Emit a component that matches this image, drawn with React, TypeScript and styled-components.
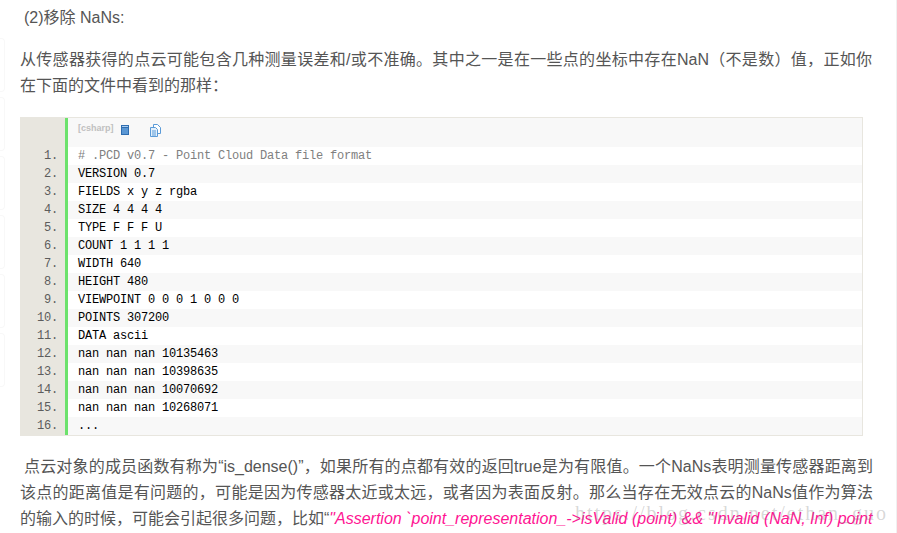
import React from 'react'
import styled, { createGlobalStyle } from 'styled-components'

const GlobalStyle = createGlobalStyle`
  html, body {
    margin: 0;
    padding: 0;
    background: #fff;
  }
`

const Page = styled.div`
  position: relative;
  width: 897px;
  height: 533px;
  overflow: hidden;
  box-sizing: border-box;
  border-right: 1px solid #f0f0f0;
  font-family: "Liberation Sans", "Noto Sans CJK SC", sans-serif;
  font-size: 16px;
  line-height: 26px;
  color: #555;
  text-spacing-trim: space-all;
`

const SideRail = styled.div`
  position: absolute;
  left: 0;
  top: 38px;
  display: flex;
  flex-direction: column;
  gap: 5px;
`

const RailTab = styled.div`
  width: 5px;
  height: 54px;
  box-sizing: border-box;
  border: 1px solid #f8f8f8;
  border-left: 0;
  border-radius: 0 4px 4px 0;
`

const Article = styled.div`
  position: relative;
  width: 853px;
  padding: 5px 0 0 20px;
`

const Heading = styled.p`
  margin: 0 0 16px;
  text-indent: 4px;
`

const Paragraph = styled.p<{ $indent?: boolean }>`
  margin: 0;
  padding-right: ${p => (p.$indent ? '0' : '1px')};
  text-align: justify;
  text-indent: ${p => (p.$indent ? '4px' : '0')};
`

const Emphasis = styled.em`
  color: #ff1493;
`

const CodeBlock = styled.div`
  width: 843px;
  margin: 18px 0 18px;
  box-sizing: border-box;
  display: grid;
  grid-template-columns: 45px 1fr;
  background: #e8e6df;
  border: 1px solid #e8e6df;
  border-left: 0;
  font-family: "Liberation Mono", monospace;
  font-size: 12px;
  letter-spacing: -0.2px;
  line-height: 18px;
`

const Toolbar = styled.div`
  grid-column: 2;
  height: 29px;
  box-sizing: border-box;
  display: flex;
  align-items: flex-start;
  padding: 3px 0 0 10px;
  background: #f8f8f8;
  border-left: 3px solid #6ce26c;
  letter-spacing: 0;
`

const LangLabel = styled.span`
  font-family: "Liberation Sans", sans-serif;
  font-size: 9px;
  font-weight: bold;
  line-height: 14px;
  color: #c0c0c0;
`

const ToolIcon = styled.svg<{ $gap: number; $top: number }>`
  display: block;
  margin-left: ${p => p.$gap}px;
  margin-top: ${p => p.$top}px;
`

const LineNumber = styled.div`
  grid-column: 1;
  padding-right: 7px;
  text-align: right;
  color: #5c5c5c;
`

const CodeLine = styled.div<{ $even: boolean; $comment: boolean }>`
  grid-column: 2;
  height: 18px;
  padding-left: 10px;
  background: ${p => (p.$even ? '#f8f8f8' : '#fff')};
  border-left: 3px solid #6ce26c;
  color: ${p => (p.$comment ? '#808080' : '#000')};
  white-space: pre;
`

const Watermark = styled.div`
  position: absolute;
  left: 575px;
  top: 501px;
  font-family: "Liberation Serif", serif;
  font-size: 20px;
  line-height: 24px;
  letter-spacing: 2px;
  color: rgba(120, 120, 120, 0.3);
  white-space: nowrap;
  pointer-events: none;
`

const lines = [
  '# .PCD v0.7 - Point Cloud Data file format',
  'VERSION 0.7',
  'FIELDS x y z rgba',
  'SIZE 4 4 4 4',
  'TYPE F F F U',
  'COUNT 1 1 1 1',
  'WIDTH 640',
  'HEIGHT 480',
  'VIEWPOINT 0 0 0 1 0 0 0',
  'POINTS 307200',
  'DATA ascii',
  'nan nan nan 10135463',
  'nan nan nan 10398635',
  'nan nan nan 10070692',
  'nan nan nan 10268071',
  '...',
]

const App = () => {
  return (
    <Page>
      <GlobalStyle />
      <SideRail>
        {[0, 1, 2, 3, 4, 5].map(i => <RailTab key={i} />)}
      </SideRail>
      <Article>
        <Heading>(2)移除 NaNs:</Heading>
        <Paragraph>
          从传感器获得的点云可能包含几种测量误差和/或不准确。其中之一是在一些点的坐标中存在NaN（不是数）值，正如你在下面的文件中看到的那样：
        </Paragraph>
        <CodeBlock>
          <Toolbar>
            <LangLabel>[csharp]</LangLabel>
            <ToolIcon $gap={7} $top={4} width="8" height="10" viewBox="0 0 8 10">
              <rect x="0" y="0" width="8" height="10" fill="#2f6db0" />
              <rect x="1" y="1" width="6" height="1" fill="#a9cdf0" />
              <rect x="1" y="3" width="6" height="6" fill="#5a97d4" />
            </ToolIcon>
            <ToolIcon $gap={21} $top={3} width="11" height="13" viewBox="0 0 11 13">
              <path d="M3.5 .5h4l3 3v6h-7z" fill="#fff" stroke="#5b9bd8" />
              <path d="M.5 3.5h5l2 2v7h-7z" fill="#e4f0fb" stroke="#5b9bd8" />
              <path d="M2 7h4M2 9h4M2 11h4" stroke="#5b9bd8" />
            </ToolIcon>
          </Toolbar>
          {lines.map((line, i) => (
            <React.Fragment key={i}>
              <LineNumber>{i + 1}.</LineNumber>
              <CodeLine $even={i % 2 === 1} $comment={i === 0}>{line}</CodeLine>
            </React.Fragment>
          ))}
        </CodeBlock>
        <Paragraph $indent>
          点云对象的成员函数有称为“is_dense()”，如果所有的点都有效的返回true是为有限值。一个NaNs表明测量传感器距离到该点的距离值是有问题的，可能是因为传感器太近或太远，或者因为表面反射。那么当存在无效点云的NaNs值作为算法的输入的时候，可能会引起很多问题，比如“
          <Emphasis>"Assertion `point_representation_-&gt;isValid (point) &amp;&amp; "Invalid (NaN, Inf) point</Emphasis>
        </Paragraph>
      </Article>
      <Watermark>https://blog.csdn.net/ethan_guo</Watermark>
    </Page>
  )
}

export default App
